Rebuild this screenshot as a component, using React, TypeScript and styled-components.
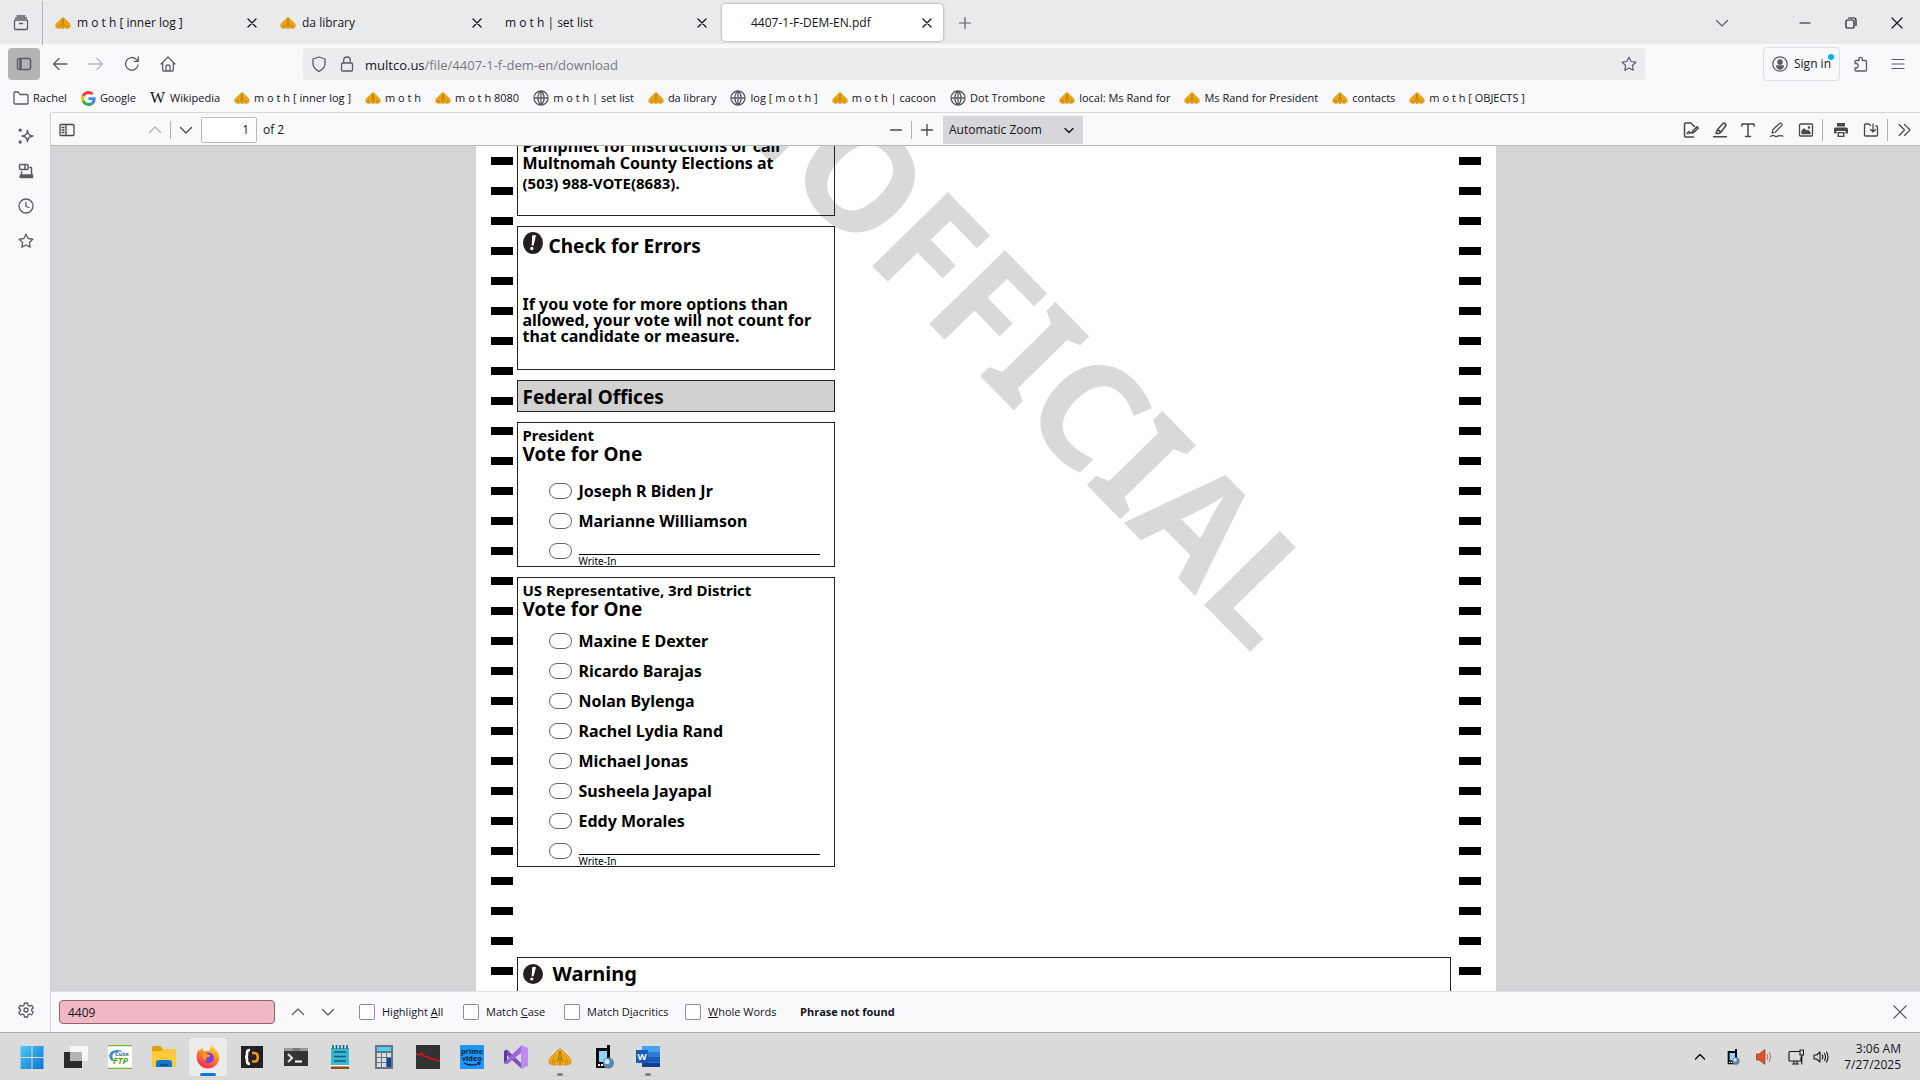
import React from "react";
import styled, { createGlobalStyle } from "styled-components";

const Global = createGlobalStyle`
  * { box-sizing: border-box; }
  body { margin: 0; background: #f9f9fb; }
  button, input, select { font: inherit; color: inherit; }
`;

const ui = `"Open Sans", "Noto Sans", sans-serif`;
const doc = `"Noto Sans", "Open Sans", sans-serif`;

const Screen = styled.div`
  display: flex;
  flex-direction: column;
  height: 100vh;
  overflow: hidden;
  font-family: ${ui};
  font-size: 12px;
  line-height: 16px;
  color: #15141a;
`;

const IconButton = styled.button<{ $w?: number; $h?: number; $on?: boolean; $dim?: boolean; $dark?: boolean }>`
  display: flex;
  align-items: center;
  justify-content: center;
  flex: none;
  width: ${(p) => p.$w ?? 28}px;
  height: ${(p) => p.$h ?? 28}px;
  padding: 0;
  border: 0;
  border-radius: 4px;
  background: ${(p) => (p.$on ? "#b4b4b7" : "transparent")};
  color: ${(p) => (p.$dark ? "#15141a" : "#5b5b66")};
  opacity: ${(p) => (p.$dim ? 0.4 : 1)};
`;

const Spacer = styled.div<{ $w?: number }>`
  flex: ${(p) => (p.$w ? `0 0 ${p.$w}px` : "1")};
`;

/* ---------- tab strip ---------- */

const TabStrip = styled.header`
  display: flex;
  align-items: center;
  flex: none;
  height: 44px;
  padding-top: 1px;
  background: #eaeaed;
`;

const ListAll = styled.div`
  display: flex;
  align-items: center;
  justify-content: center;
  width: 43px;
  height: 44px;
  margin-right: 4px;
  border-right: 1px solid #b6b6ba;
`;

const Tab = styled.div<{ $active?: boolean; $indent?: boolean }>`
  display: flex;
  align-items: center;
  gap: 6px;
  width: 221px;
  height: 37px;
  margin-right: 4px;
  padding: 0 4px 0 ${(p) => (p.$indent ? 29 : 8)}px;
  border-radius: 4px;
  background: ${(p) => (p.$active ? "#fff" : "transparent")};
  box-shadow: ${(p) => (p.$active ? "0 0 3px rgba(0,0,0,.4)" : "none")};
`;

const TabTitle = styled.span`
  flex: 1;
  white-space: nowrap;
`;

/* ---------- navigation ---------- */

const NavBar = styled.nav`
  display: flex;
  align-items: center;
  flex: none;
  height: 40px;
  padding: 0 6px 0 8px;
  gap: 4px;
`;

const AddressBar = styled.div`
  display: flex;
  align-items: center;
  flex: 1;
  height: 32px;
  margin: 0 114px 0 115px;
  padding: 0 2px;
  border-radius: 4px;
  background: #ececee;
  font-size: 13px;
`;

const Address = styled.a`
  flex: 1;
  padding: 2px 0 0 4px;
  color: #77777d;
  text-decoration: none;
  b { font-weight: 400; color: #15141a; }
`;

const SignIn = styled.button`
  position: relative;
  display: flex;
  align-items: center;
  gap: 6px;
  height: 34px;
  padding: 0 8px;
  border: 1px solid #dedee2;
  border-radius: 4px;
  background: transparent;
  color: #5b5b66;
  span { color: #15141a; }
  &::after {
    content: "";
    position: absolute;
    top: 6px;
    right: 5px;
    width: 6px;
    height: 6px;
    border-radius: 50%;
    background: #00b3f4;
  }
`;

const Bookmarks = styled.nav`
  display: flex;
  align-items: center;
  flex: none;
  gap: 14px;
  height: 28px;
  padding: 0 13px;
`;

const Bookmark = styled.a`
  display: flex;
  align-items: center;
  gap: 4px;
  white-space: nowrap;
  text-decoration: none;
  font-size: 11px;
  color: #5b5b66;
  span { color: #15141a; }
`;

/* ---------- main ---------- */

const Main = styled.div`
  display: flex;
  flex: 1;
  min-height: 0;
`;

const Rail = styled.aside`
  display: flex;
  flex-direction: column;
  align-items: center;
  flex: none;
  width: 50px;
  padding: 10px 0 8px 2px;
  gap: 7px;
`;

const Content = styled.main`
  display: flex;
  flex-direction: column;
  flex: 1;
  min-width: 0;
  border-top: 1px solid #d8d8dc;
  border-left: 1px solid #d0d0d4;
  border-top-left-radius: 2px;
`;

const PdfBar = styled.div`
  display: grid;
  grid-template-columns: 1fr auto 1fr;
  align-items: center;
  flex: none;
  height: 33px;
  padding: 1px 2px 0;
  background: #f9f9fa;
  border-bottom: 1px solid #b8b8b8;
`;

const Group = styled.div<{ $end?: boolean; $mid?: boolean }>`
  display: flex;
  align-items: center;
  justify-content: ${(p) => (p.$end ? "flex-end" : "flex-start")};
  padding-right: ${(p) => (p.$mid ? 6 : 0)}px;
  button { color: #48484c; }
`;

const Rule = styled.i<{ $tall?: boolean }>`
  width: 1px;
  height: ${(p) => (p.$tall ? 22 : 18)}px;
  margin: 0 ${(p) => (p.$tall ? 2 : 1)}px;
  background: #b0b0b2;
`;

const PageNumber = styled.input`
  width: 56px;
  height: 26px;
  margin: 0 6px 0 1px;
  padding: 0 7px;
  border: 1px solid #bbbbbc;
  border-radius: 2px;
  background: #fff;
  text-align: right;
`;

const SelectWrap = styled.label`
  display: grid;
  align-items: center;
  margin-left: 2px;
  > * { grid-area: 1 / 1; }
  svg { justify-self: end; margin-right: 6px; pointer-events: none; }
`;

const ZoomSelect = styled.select`
  appearance: none;
  width: 140px;
  height: 28px;
  padding: 0 6px;
  border: 0;
  border-radius: 0;
  background: #d7d7db;
`;

const Viewer = styled.section`
  flex: 1;
  min-height: 0;
  overflow: hidden;
  background: #d4d4d7;
`;

const Page = styled.article`
  position: relative;
  display: flex;
  width: 1020px;
  margin: 0 auto;
  padding: 0 15px;
  background: #fff;
  color: #000;
  font-family: ${doc};
  font-weight: 700;
  font-size: 16px;
  overflow: hidden;
`;

const Marks = styled.div`
  display: flex;
  flex-direction: column;
  gap: 22px;
  width: 22px;
  padding-top: 11px;
  i { height: 8px; background: #000; }
`;

const Body = styled.div`
  position: relative;
  display: flex;
  flex-direction: column;
  gap: 10px;
  flex: 1;
  margin: -9px 8px 0 4px;
`;

const Watermark = styled.div`
  position: absolute;
  right: 237px;
  top: 380px;
  transform: rotate(45.6deg);
  transform-origin: 100% 84%;
  font-size: 148px;
  line-height: 148px;
  color: #d9d9d9;
  white-space: nowrap;
`;

const Box = styled.section<{ $wide?: boolean; $shade?: boolean }>`
  width: ${(p) => (p.$wide ? "100%" : "318px")};
  padding: ${(p) => (p.$shade ? 2 : 0)}px 5px ${(p) => (p.$wide ? 30 : 0)}px;
  border: 1px solid #222;
  background: ${(p) => (p.$shade ? "#d1d1d1" : "transparent")};
`;

const Help = styled.p`
  margin: 0;
  padding-bottom: 20px;
  line-height: 17px;
  span { display: block; font-size: 15px; line-height: 23px; }
`;

const Heading = styled.h2<{ $large?: boolean }>`
  margin: 0;
  font-size: ${(p) => (p.$large ? 20 : 19)}px;
  line-height: 28px;
`;

const IconHeading = styled.div<{ $wide?: boolean }>`
  display: flex;
  align-items: ${(p) => (p.$wide ? "center" : "flex-start")};
  gap: ${(p) => (p.$wide ? 10 : 6)}px;
  padding-top: ${(p) => (p.$wide ? 2 : 5)}px;
`;

const Note = styled.p`
  margin: 0;
  padding: 36px 0 25px;
  line-height: 16px;
`;

const ContestHead = styled.header<{ $gap: number }>`
  padding: 4px 0 ${(p) => p.$gap}px;
  h3 { margin: 0; font-size: 15px; line-height: 17px; }
  p { margin: 0; font-size: 19px; line-height: 20px; }
`;

const Choice = styled.label`
  display: flex;
  align-items: center;
  gap: 7px;
  height: 30px;
  padding-left: 26px;
`;

const Oval = styled.input`
  appearance: none;
  flex: none;
  width: 23px;
  height: 16px;
  margin: 0;
  border: 1px solid #666;
  border-radius: 8px;
  background: #fff;
`;

const WriteIn = styled.span`
  align-self: flex-end;
  width: 241px;
  padding-top: 1px;
  border-top: 1px solid #000;
  font-size: 10px;
  line-height: 10px;
  font-weight: 400;
`;

const Warning = styled.div`
  margin-top: 80px;
  display: flex;
`;

/* ---------- find bar ---------- */

const FindBar = styled.form`
  display: flex;
  align-items: center;
  flex: none;
  height: 41px;
  padding: 0 8px;
  border-top: 1px solid #e0e0e4;
  font-size: 11px;
`;

const FindInput = styled.input`
  width: 216px;
  height: 24px;
  margin-right: 8px;
  padding: 0 8px;
  border: 1px solid #8f6470;
  border-radius: 4px;
  background: #f2b8c6;
  font-size: 12px;
`;

const Check = styled.label<{ $w: number }>`
  display: flex;
  align-items: center;
  gap: 7px;
  width: ${(p) => p.$w}px;
  white-space: nowrap;
  input {
    appearance: none;
    width: 16px;
    height: 16px;
    margin: 0;
    border: 1px solid #8f8f9d;
    border-radius: 2px;
    background: #fff;
  }
`;

/* ---------- taskbar ---------- */

const Taskbar = styled.footer`
  display: flex;
  align-items: center;
  flex: none;
  height: 48px;
  padding: 0 19px 0 10px;
  background: #dadada;
  border-top: 1px solid #ababad;
`;

const AppButton = styled.button<{ $active?: boolean; $open?: boolean }>`
  position: relative;
  display: flex;
  align-items: center;
  justify-content: center;
  width: 38px;
  height: 38px;
  margin: 0 3px;
  padding: 0;
  border: 0;
  border-radius: 4px;
  background: ${(p) => (p.$active ? "#ececec" : "transparent")};
  &::after {
    content: "";
    position: absolute;
    bottom: 0;
    width: ${(p) => (p.$active ? 16 : p.$open ? 6 : 0)}px;
    height: 3px;
    border-radius: 2px;
    background: ${(p) => (p.$active ? "#0a78d4" : "#858585")};
  }
`;

const Tray = styled.div`
  display: flex;
  align-items: center;
`;

const Clock = styled.time`
  width: 72px;
  text-align: right;
  line-height: 16px;
`;

/* ---------- drawings ---------- */

type P = { d: string; s?: number; w?: number; fill?: boolean; children?: React.ReactNode };
const Glyph = ({ d, s = 16, w = 1.3, fill, children }: P) => (
  <svg width={s} height={s} viewBox="0 0 16 16" fill={fill ? "currentColor" : "none"} stroke={fill ? "none" : "currentColor"} strokeWidth={w} strokeLinecap="round" strokeLinejoin="round">
    <path d={d} />
    {children}
  </svg>
);

const star = "M8 1.2l2.1 4.3 4.7.7-3.4 3.3.8 4.7L8 12l-4.2 2.2.8-4.7L1.2 6.2l4.7-.7z";
const down = "M2.5 5.5L8 11l5.5-5.5";
const up = "M2.5 10.5L8 5l5.5 5.5";
const cross = "M4 4l8 8M12 4l-8 8";

const Moth = ({ s = 16 }: { s?: number }) => (
  <svg width={s} height={s} viewBox="0 0 24 24">
    <path d="M10.500 4.500Q12 3 13.500 4.500L22.500 13.500Q23.500 15.500 22.500 18.500Q20 20.500 16.500 20L14 19L12 21L10 19L7.500 20Q4 20.500 1.500 18.500Q.5 15.500 1.500 13.500Z" fill="#f2ab12" stroke="#c98512" strokeWidth=".8" />
    <path d="M12 6l-2.500 11M12 6l2.500 11M12 12v7" stroke="#9c6410" strokeWidth=".9" fill="none" />
    <path d="M8 10l-2.500 3M16 10l2.500 3" stroke="#c07c12" strokeWidth=".8" fill="none" />
    <circle cx="5.500" cy="16.500" r="1.500" fill="none" stroke="#b8750f" strokeWidth=".9" />
    <circle cx="18.500" cy="16.500" r="1.500" fill="none" stroke="#b8750f" strokeWidth=".9" />
  </svg>
);

const Globe = () => (
  <Glyph d="M8 1a7 7 0 100 14A7 7 0 008 1zM8 1C3.800 4.500 3.800 11.500 8 15M8 1c4.200 3.500 4.200 10.500 0 14M8 1v14M1 8h14" />
);

const Google = () => (
  <svg width="15" height="15" viewBox="0 0 48 48">
    <path fill="#EA4335" d="M24 9.500c3.540 0 6.710 1.220 9.210 3.600l6.850-6.850C35.900 2.380 30.470 0 24 0 14.620 0 6.510 5.380 2.560 13.220l7.980 6.190C12.430 13.720 17.740 9.500 24 9.500z" />
    <path fill="#4285F4" d="M46.980 24.550c0-1.570-.15-3.090-.38-4.550H24v9.020h12.940c-.58 2.960-2.260 5.480-4.780 7.180l7.730 6c4.510-4.180 7.090-10.360 7.090-17.650z" />
    <path fill="#FBBC05" d="M10.530 28.590c-.48-1.450-.76-2.990-.76-4.590s.27-3.140.76-4.590l-7.980-6.190C.92 16.460 0 20.120 0 24s.92 7.540 2.560 10.780z" />
    <path fill="#34A853" d="M24 48c6.480 0 11.930-2.130 15.890-5.810l-7.730-6c-2.150 1.450-4.920 2.300-8.160 2.300-6.260 0-11.570-4.220-13.470-9.910l-7.980 6.190C6.510 42.620 14.620 48 24 48z" />
  </svg>
);

const WikiW = styled.b`
  width: 16px;
  font: 400 16px/16px "Liberation Serif", serif;
  color: #111;
`;

const Alert = ({ tall }: { tall?: boolean }) => (
  <svg width="20" height={tall ? 22 : 20} viewBox="0 0 20 22" preserveAspectRatio="none">
    <ellipse cx="10" cy="11" rx="10" ry="11" fill="#231f20" />
    <path d="M9.200 3.500q2.200-1.200 3.800 0L10.600 13.500H8.700z" fill="#fff" />
    <ellipse cx="8.800" cy="16.500" rx="1.600" ry="1.700" fill="#fff" />
  </svg>
);

const Phone = ({ s = 24 }: { s?: number }) => (
  <svg width={s} height={s} viewBox="0 0 24 24">
    <path d="M4 3h11V0h3v23H4z" fill="#0a0a0a" />
    <path d="M7 6h8v11H7z" fill="#8fd3f5" />
    <path d="M6 19h2v2H6zM9 19h2v2H9z" fill="#fff" />
    <circle cx="16.500" cy="18" r="5.500" fill="#5b84b4" />
    <circle cx="15" cy="16.500" r="2.600" fill="#d5e5f2" />
  </svg>
);

const art: Record<string, React.ReactNode> = {
  Start: (<><defs><linearGradient id="win" x2="1" y2="1"><stop stopColor="#4fc8f8" /><stop offset="1" stopColor="#0a74cf" /></linearGradient></defs><path fill="url(#win)" d="M.5 1h11v11H.5zM12.500 1h11v11h-11zM.5 13h11v11H.5zM12.500 13h11v11h-11z" /></>),
  "Task View": (<><path d="M0 7h18v16H0z" fill="#2b2b2b" /><path d="M6 1h18v15H6z" fill="#f6f6f6" /><path d="M6 7h12v9H6z" fill="#b4b4b4" /></>),
  CuteFTP: (<><path d="M0 0h24v24H0z" fill="#fff" /><path d="M0 0h24v1.300H0zM0 22.700h24V24H0z" fill="#76b82a" /><path d="M1.500 13Q0 6 8 5Q13 4.500 15 6.500Q6 6 4.500 10Q4 14 7 16Q2.500 16.500 1.500 13z" fill="#3a8fd0" /><text x="7" y="11" fontSize="6" fontWeight="700" fill="#2a5f9c">Cute</text><text x="5" y="19" fontSize="9" fontWeight="700" fontStyle="italic" fill="#58a618">FTP</text></>),
  "File Explorer": (<><path d="M0 3q0-2 2-2h6l3 3h11q2 0 2 2v4H0z" fill="#e0a000" /><path d="M0 6h9l2-2h11q2 0 2 2v15q0 1-1.500 1H1.500Q0 22 0 21z" fill="#ffcb3d" /><path d="M4 22v-4q0-3 3-3h10q3 0 3 3v4z" fill="#0f78c8" /><path d="M8 19h8v1.500H8z" fill="#0a4f8f" /></>),
  Firefox: (<><defs><linearGradient id="fx" x1=".8" y1="0" x2=".3" y2="1"><stop stopColor="#ffe14a" /><stop offset=".45" stopColor="#ff8a1d" /><stop offset="1" stopColor="#f4255e" /></linearGradient></defs><path d="M22.500 9C22 6 20 5 18.500 3.500 17.500 2.500 17 1 17.300 0 14.500 1.500 13.300 4 13.500 6 12 5.500 10 5.500 8.500 6.500 7 5.500 6.500 4 6.500 3 5 4 4 5.200 3.500 6.500L3 4C1.500 6 .7 9 .7 12.500A11.300 11.300 0 0012 23.500 11.300 11.300 0 0023.300 12.500q0-2-.8-3.500z" fill="url(#fx)" /><circle cx="12.500" cy="12.800" r="5.300" fill="#7a3ee0" /><path d="M6 9q3-1.500 6 .5l2.500 1q-1 2-4 2-1 2 .5 3.500-4.500-.5-5-7z" fill="#ff9a22" /></>),
  Brackets: (<><path d="M1 1h22v22H1z" fill="#222" /><path d="M10 5Q7 5 7 8v2q0 2-2 2 2 0 2 2v2q0 3 3 3" stroke="#fff" strokeWidth="2.600" fill="none" /><path d="M12 8h2.500q3 .5 3 2.500 0 1.700 1.500 1.700-1.500 0-1.500 1.700 0 2.300-3 2.600H12" stroke="#f7941d" strokeWidth="2.600" fill="none" /></>),
  Terminal: (<><path d="M0 3h24v18H0z" fill="#333" /><path d="M0 3h24v3H0z" fill="#999" /><path d="M9 3h7v3H9z" fill="#777" /><path d="M4 9l4 4-4 4" stroke="#ddd" strokeWidth="2.200" fill="none" /><path d="M11 16.500h7" stroke="#fff" strokeWidth="2" /></>),
  Notepad: (<><path d="M3 3h18v18H3z" fill="#3db6d3" /><path d="M3 20h18v1.500H3z" fill="#fff" /><path d="M3 21.500h18V24H3z" fill="#9c4a12" /><path d="M6 7h12M6 11.500h12M6 16h12" stroke="#0a5c78" strokeWidth="1.700" /><path d="M5 0v4M8.500 0v4M12 0v4M15.500 0v4M19 0v4" stroke="#0f5e76" strokeWidth="1.500" /></>),
  Calculator: (<><path d="M3 0h18v24H3z" fill="#687480" /><path d="M5 2h14v4H5z" fill="#49d4f5" /><path d="M5 8h4v4H5zM10 8h4v4h-4zM15 8h4v4h-4zM5 13h4v4H5zM10 13h4v4h-4zM5 18h4v4H5zM10 18h4v4h-4z" fill="#d8dde2" /><path d="M15 13h4v9h-4z" fill="#0a4a9c" /></>),
  Monitor: (<><path d="M0 0h24v24H0z" fill="#303234" /><path d="M0 9l4 1 2-2 1 3 4 .5 3 2 5 1 5 1.500" stroke="#d8141c" strokeWidth="1.600" fill="none" /></>),
  "Prime Video": (<><path d="M0 0h24v24H0z" fill="#1a98ff" /><text x="12" y="8.500" textAnchor="middle" fontSize="7.500" fontWeight="700" fill="#06182c">prime</text><text x="12" y="15.500" textAnchor="middle" fontSize="7.500" fontWeight="700" fill="#06182c">video</text><path d="M4 18q7.500 4 15 .5M17 17.500h3l-.7 2.500" stroke="#06182c" strokeWidth="1.100" fill="none" /></>),
  "Visual Studio": (<><path d="M0 6l3-1.500L18 19v5L0 8z" fill="#7b52b8" /><path d="M0 18V6l3-1v14z" fill="#5f3c9c" /><path d="M0 18l3 1.500L18 7V0L8 9.500z" fill="#9a68d8" /><path d="M17 0l7 3v18l-7 3z" fill="#c08af5" /></>),
  Moth: <Moth s={24} />,
  Phone: <Phone />,
  Word: (<><path d="M6 1h18v5.500H6z" fill="#41a5ee" /><path d="M6 6.500h18V12H6z" fill="#2b7cd3" /><path d="M6 12h18v5.500H6z" fill="#185abd" /><path d="M6 17.500h18V22H6z" fill="#103f91" /><path d="M0 5h12v13H0z" fill="#185abd" /><text x="6" y="15" textAnchor="middle" fontSize="9.500" fontWeight="700" fill="#fff">W</text></>),
};

const bookmarks: [string, string][] = [
  ["folder", "Rachel"], ["google", "Google"], ["wiki", "Wikipedia"], ["moth", "m o t h [ inner log ]"], ["moth", "m o t h"],
  ["moth", "m o t h 8080"], ["globe", "m o t h | set list"], ["moth", "da library"], ["globe", "log [ m o t h ]"],
  ["moth", "m o t h | cacoon"], ["globe", "Dot Trombone"], ["moth", "local: Ms Rand for"], ["moth", "Ms Rand for President"],
  ["moth", "contacts"], ["moth", "m o t h [ OBJECTS ]"],
];

const bookmarkIcon: Record<string, React.ReactNode> = {
  folder: <Glyph d="M1 13V3q0-1 1-1h3.500L7 4.500h7q1 0 1 1V13q0 1-1 1H2q-1 0-1-1z" />,
  google: <Google />,
  wiki: <WikiW>W</WikiW>,
  moth: <Moth />,
  globe: <Globe />,
};

const Contest = ({ title, gap, names }: { title: string; gap: number; names: string[] }) => (
  <Box>
    <ContestHead $gap={gap}>
      <h3>{title}</h3>
      <p>Vote for One</p>
    </ContestHead>
    {names.map((n) => (
      <Choice key={n}>
        <Oval type="radio" name={title} />
        {n}
      </Choice>
    ))}
    <Choice>
      <Oval type="radio" name={title} />
      <WriteIn>Write-In</WriteIn>
    </Choice>
  </Box>
);

const MarkColumn = () => (
  <Marks>
    {Array.from({ length: 29 }, (_, i) => <i key={i} />)}
  </Marks>
);

const CloseTab = () => (
  <IconButton $w={24} $h={24} $dark aria-label="Close tab">
    <Glyph d={cross} />
  </IconButton>
);

export default function App() {
  return (
    <Screen>
      <Global />
      <TabStrip>
        <ListAll>
          <IconButton aria-label="Firefox View">
            <Glyph d="M1.500 6q0-1 1-1h11q1 0 1 1v7.500q0 1-1 1h-11q-1 0-1-1zM2.500 3h11M4 1h8M6.500 8.500h3" />
          </IconButton>
        </ListAll>
        <Tab><Moth /><TabTitle>m o t h [ inner log ]</TabTitle><CloseTab /></Tab>
        <Tab><Moth /><TabTitle>da library</TabTitle><CloseTab /></Tab>
        <Tab><TabTitle>m o t h | set list</TabTitle><CloseTab /></Tab>
        <Tab $active $indent><TabTitle>4407-1-F-DEM-EN.pdf</TabTitle><CloseTab /></Tab>
        <IconButton $w={36} aria-label="New tab"><Glyph d="M8 2.500v11M2.500 8h11" w={1.200} /></IconButton>
        <Spacer />
        <IconButton $w={120} aria-label="List all tabs"><Glyph d={down} w={1.200} /></IconButton>
        <IconButton $w={46} $dark aria-label="Minimize"><Glyph d="M3 8h10" w={1.200} /></IconButton>
        <IconButton $w={46} $dark aria-label="Restore"><Glyph d="M3 6q0-1 1-1h6q1 0 1 1v6q0 1-1 1H4q-1 0-1-1zM5.500 3H11q2 0 2 2v5.500" w={1.200} /></IconButton>
        <IconButton $w={46} $dark aria-label="Close"><Glyph d="M3 3l10 10M13 3L3 13" w={1.200} /></IconButton>
      </TabStrip>

      <NavBar>
        <IconButton $w={32} $h={32} $on aria-label="Sidebars">
          <Glyph d="M1.500 4q0-1.500 1.500-1.500h10q1.500 0 1.500 1.500v8q0 1.500-1.500 1.500H3q-1.500 0-1.500-1.500zM4 3v10M5 3v10" w={1.500} />
        </IconButton>
        <IconButton $w={32} aria-label="Back"><Glyph d="M15 8H1.500M7 2.500L1.500 8 7 13.500" /></IconButton>
        <IconButton $w={32} $dim aria-label="Forward"><Glyph d="M1 8h13.500M9 2.500L14.500 8 9 13.500" /></IconButton>
        <IconButton $w={32} aria-label="Reload"><Glyph d="M14 9a6.300 6.300 0 11-1.700-5.600L14 5M14.300 1v4.300H10" /></IconButton>
        <IconButton $w={32} aria-label="Home"><Glyph d="M1 8l7-7 7 7M2.700 6.500V14q0 1 1 1h8.600q1 0 1-1V6.500M6 15v-4q0-2 2-2t2 2v4" /></IconButton>
        <AddressBar>
          <IconButton aria-label="Tracking protection"><Glyph d="M8 1l6 2v4.500q0 5-6 7.800-6-2.800-6-7.800V3z" /></IconButton>
          <IconButton aria-label="Site information"><Glyph d="M2.500 8q0-1 1-1h9q1 0 1 1v6q0 1-1 1h-9q-1 0-1-1zM4.700 7V4.300a3.300 3.300 0 016.600 0V7" /></IconButton>
          <Address href="#"><b>multco.us</b>/file/4407-1-f-dem-en/download</Address>
          <IconButton aria-label="Bookmark this page"><Glyph d={star} w={1.200} /></IconButton>
        </AddressBar>
        <SignIn>
          <Glyph d="M8 .8a7.200 7.200 0 100 14.400A7.200 7.200 0 008 .8z">
            <circle cx="8" cy="6" r="2.200" fill="currentColor" />
            <path d="M4.500 10h7q-1 3-3.500 3t-3.500-3z" fill="currentColor" />
          </Glyph>
          <span>Sign in</span>
        </SignIn>
        <IconButton $w={34} aria-label="Extensions"><Glyph d="M2 7.500V5.500q0-1 1-1h3V3q0-1.700 1.700-1.700T9.400 3v1.500h3.100q1 0 1 1V14q0 1-1 1H3q-1 0-1-1v-2h1.500q1.800-.3 1.800-2.200T3.500 7.500z" /></IconButton>
        <IconButton $w={32} aria-label="Menu"><Glyph d="M2 3.500h12M2 8h12M2 12.500h12" w={1.200} /></IconButton>
      </NavBar>

      <Bookmarks>
        {bookmarks.map(([icon, label]) => (
          <Bookmark href="#" key={label}>{bookmarkIcon[icon]}<span>{label}</span></Bookmark>
        ))}
      </Bookmarks>

      <Main>
        <Rail>
          <IconButton aria-label="Chatbot"><Glyph d="M9.500 2.500q.6 5.200 5.500 5.500-4.900.3-5.500 5.500Q8.900 8.300 4 8q4.900-.3 5.500-5.500z" w={1.500}><circle cx="2.200" cy="2.200" r=".9" fill="currentColor" /><circle cx="2.200" cy="14" r=".9" fill="currentColor" /></Glyph></IconButton>
          <IconButton aria-label="Synced tabs"><Glyph d="M1.500 2.500q0-1 1-1H9q1 0 1 1v3q0 1-1 1H2.500q-1 0-1-1zM7 2v4M12 4.500h1.500V11M3.500 9v2M2 13.500h12.500" w={1.500}><path d="M2.500 12h12v2.500h-12z" fill="currentColor" /></Glyph></IconButton>
          <IconButton aria-label="History"><Glyph d="M8 1a7 7 0 100 14A7 7 0 008 1zM8 4.500V8.500l3 1" /></IconButton>
          <IconButton aria-label="Bookmarks"><Glyph d={star} /></IconButton>
          <Spacer />
          <IconButton aria-label="Customize sidebar"><Glyph d="M6.500 1h3l.5 2.200 1.500.9 2.200-.8 1.500 2.600L13.600 7.300v1.500l1.600 1.400-1.500 2.600-2.200-.8-1.500.9-.5 2.100h-3L6 12.900 4.500 12l-2.200.8L.8 10.200l1.600-1.400V7.300L.8 5.900l1.500-2.600 2.200.8L6 3.200z"><circle cx="8" cy="8" r="2" /></Glyph></IconButton>
        </Rail>
        <Content>
          <PdfBar>
            <Group>
              <IconButton aria-label="Toggle sidebar"><Glyph d="M1 3.500q0-1 1-1h12q1 0 1 1v9q0 1-1 1H2q-1 0-1-1zM7 3v10M3 5.500h2M3 8h2M3 10.500h2" /></IconButton>
              <Spacer $w={60} />
              <IconButton $dim aria-label="Previous page"><Glyph d={up} /></IconButton>
              <Rule />
              <IconButton aria-label="Next page"><Glyph d={down} /></IconButton>
              <PageNumber aria-label="Page" defaultValue="1" />
              <span>of 2</span>
            </Group>
            <Group $mid>
              <IconButton aria-label="Zoom out"><Glyph d="M2.500 8h11" /></IconButton>
              <Rule />
              <IconButton aria-label="Zoom in"><Glyph d="M2.500 8h11M8 2.500v11" /></IconButton>
              <SelectWrap>
                <ZoomSelect aria-label="Zoom"><option>Automatic Zoom</option></ZoomSelect>
                <Glyph d="M4 6.500l4 4 4-4" w={1.400} />
              </SelectWrap>
            </Group>
            <Group $end>
              <IconButton $w={30} aria-label="Add signature"><Glyph d="M10.500 15H2.500q-1 0-1-1V2q0-1 1-1H8l3.500 3.500M4 11.500l2-2 .5 2 1.500-1M9 11l.7-2L14 4.700l1.300 1.300-4.300 4.300z" w={1.500} /></IconButton>
              <IconButton aria-label="Highlight"><Glyph d="M1.500 14.700h13M4 11.500l1.500-4L9 10l-2 1.500zM6 7l5-5.500q1-.8 2.200.2t.3 2.300L9.500 9.500" w={1.600} /></IconButton>
              <IconButton aria-label="Text"><Glyph d="M2 4V2h12v2M8 2v12.500M5.500 14.500h5" w={1.500} /></IconButton>
              <IconButton $w={30} aria-label="Draw"><Glyph d="M3 11l1-3.500L10.500 1.500q1-.8 2 .2t.2 2L6.500 10zM1.500 14.500q3-2 4-.7t3 .3 5.500 0" w={1.200} /></IconButton>
              <IconButton aria-label="Add image"><Glyph d="M1.500 3q0-1 1-1h11q1 0 1 1v10q0 1-1 1h-11q-1 0-1-1z"><path d="M4 11.500V9l2-2 3 2.500 1-1 2 2v1z" fill="currentColor" /><circle cx="11" cy="5.500" r=".6" fill="currentColor" /></Glyph></IconButton>
              <Rule $tall />
              <IconButton $w={32} aria-label="Print"><Glyph fill d="M4 1h8v3.500H4zM2.500 5.500h11Q15 5.500 15 7v4.500h-2.500V9h-9v2.500H1V7q0-1.500 1.500-1.500zM4.500 10h7v5h-7z"><path d="M6 11.300h4v2.400H6z" fill="#fff" /></Glyph></IconButton>
              <IconButton aria-label="Save"><Glyph d="M5.500 2H2.500q-1 0-1 1v10q0 1 1 1h11q1 0 1-1V5q0-1-1-1H13M6 2l1.500 1.500M10 2v8M7.500 7.500L10 10l2.500-2.500" /></IconButton>
              <Rule $tall />
              <IconButton aria-label="Tools"><Glyph d="M3 2.500L8.500 8 3 13.500M8.500 2.500L14 8l-5.500 5.500" w={1.200} /></IconButton>
            </Group>
          </PdfBar>

          <Viewer>
            <Page>
              <Watermark>UNOFFICIAL</Watermark>
              <MarkColumn />
              <Body>
                <Box>
                  <Help>Pamphlet for instructions or call<br />Multnomah County Elections at<span>(503) 988-VOTE(8683).</span></Help>
                </Box>
                <Box>
                  <IconHeading><Alert tall /><Heading>Check for Errors</Heading></IconHeading>
                  <Note>If you vote for more options than<br />allowed, your vote will not count for<br />that candidate or measure.</Note>
                </Box>
                <Box $shade><Heading>Federal Offices</Heading></Box>
                <Contest title="President" gap={12} names={["Joseph R Biden Jr", "Marianne Williamson"]} />
                <Contest title="US Representative, 3rd District" gap={7} names={["Maxine E Dexter", "Ricardo Barajas", "Nolan Bylenga", "Rachel Lydia Rand", "Michael Jonas", "Susheela Jayapal", "Eddy Morales"]} />
                <Warning>
                  <Box $wide>
                    <IconHeading $wide><Alert /><Heading $large>Warning</Heading></IconHeading>
                  </Box>
                </Warning>
              </Body>
              <MarkColumn />
            </Page>
          </Viewer>

          <FindBar>
            <FindInput aria-label="Find in page" defaultValue="4409" />
            <IconButton type="button" $w={30} aria-label="Find previous"><Glyph d={up} /></IconButton>
            <IconButton type="button" $w={30} aria-label="Find next"><Glyph d={down} /></IconButton>
            <Spacer $w={16} />
            <Check $w={104}><input type="checkbox" /><span>Highlight <u>A</u>ll</span></Check>
            <Check $w={101}><input type="checkbox" /><span>Match <u>C</u>ase</span></Check>
            <Check $w={121}><input type="checkbox" /><span>Match D<u>i</u>acritics</span></Check>
            <Check $w={115}><input type="checkbox" /><span><u>W</u>hole Words</span></Check>
            <b>Phrase not found</b>
            <Spacer />
            <IconButton type="button" $w={24} aria-label="Close find bar"><Glyph d="M2 2l12 12M14 2L2 14" w={1.200} /></IconButton>
          </FindBar>
        </Content>
      </Main>

      <Taskbar>
        {Object.keys(art).map((k) => (
          <AppButton key={k} aria-label={k} $active={k === "Firefox"} $open={k === "Moth" || k === "Word"}>
            <svg width="24" height="24" viewBox="0 0 24 24">{art[k]}</svg>
          </AppButton>
        ))}
        <Spacer />
        <Tray>
          <IconButton $w={34} $dark aria-label="Show hidden icons"><Glyph d="M3.500 10L8 5.500 12.500 10" w={1.500} /></IconButton>
          <IconButton $w={32} aria-label="Phone link"><Phone s={16} /></IconButton>
          <IconButton $w={30} aria-label="Audio manager">
            <svg width="16" height="16" viewBox="0 0 16 16"><path d="M0 5h3l6-4.500v15L3 11H0z" fill="#d9532c" stroke="#8c3517" strokeWidth=".6" /><path d="M11 5q1.500 3 0 6M13.300 3q2.700 5 0 10" stroke="#a9775a" fill="none" /></svg>
          </IconButton>
          <IconButton $w={34} $dark aria-label="Network"><Glyph d="M11 2.500H2q-1 0-1 1V11q0 1 1 1h11V8M4.500 15h6M6 12v3M9 12v3M12 1h3.500v5H12zM13.800 6v9" w={1.100} /></IconButton>
          <IconButton $w={16} $dark aria-label="Volume"><Glyph d="M1 6h2.500L7 3v10L3.500 10H1zM9.300 6q1 2 0 4M11.500 4.500q2 3.500 0 7M13.500 3q3 5 0 10" w={1.100} /></IconButton>
          <Clock>3:06 AM<br />7/27/2025</Clock>
        </Tray>
      </Taskbar>
    </Screen>
  );
}
